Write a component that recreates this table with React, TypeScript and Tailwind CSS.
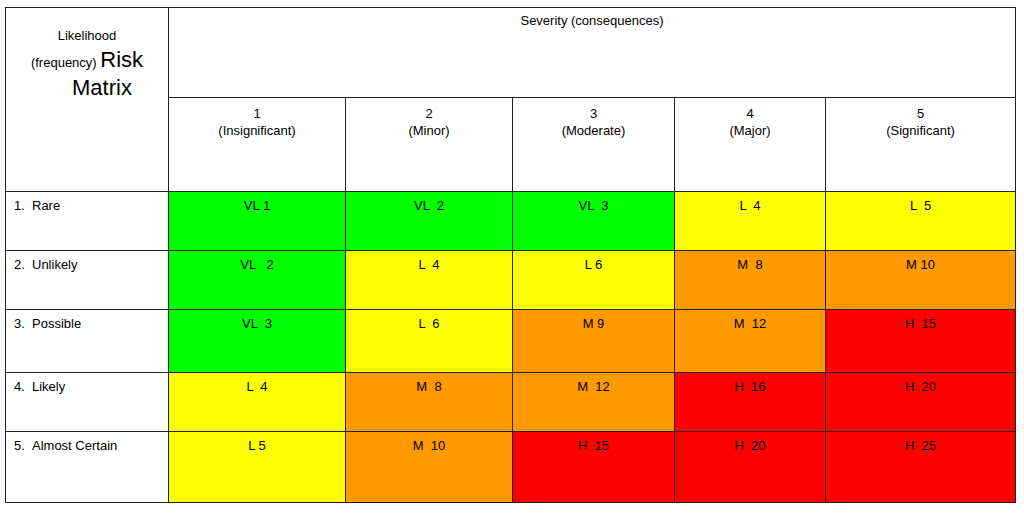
import React from "react";

type Level = "VL" | "L" | "M" | "H";

const fill: Record<Level, string> = {
  VL: "bg-[#00ff00]",
  L: "bg-[#ffff00]",
  M: "bg-[#ff9900]",
  H: "bg-[#ff0000]",
};

const severities = [
  ["1", "(Insignificant)"],
  ["2", "(Minor)"],
  ["3", "(Moderate)"],
  ["4", "(Major)"],
  ["5", "(Significant)"],
];

const rows: { no: string; label: string; h: string; cells: [Level, string][] }[] = [
  {
    no: "1.",
    label: "Rare",
    h: "h-[59px]",
    cells: [
      ["VL", "VL 1"],
      ["VL", "VL  2"],
      ["VL", "VL  3"],
      ["L", "L  4"],
      ["L", "L  5"],
    ],
  },
  {
    no: "2.",
    label: "Unlikely",
    h: "h-[59px]",
    cells: [
      ["VL", "VL   2"],
      ["L", "L  4"],
      ["L", "L 6"],
      ["M", "M  8"],
      ["M", "M 10"],
    ],
  },
  {
    no: "3.",
    label: "Possible",
    h: "h-[63px]",
    cells: [
      ["VL", "VL  3"],
      ["L", "L  6"],
      ["M", "M 9"],
      ["M", "M  12"],
      ["H", "H  15"],
    ],
  },
  {
    no: "4.",
    label: "Likely",
    h: "h-[59px]",
    cells: [
      ["L", "L  4"],
      ["M", "M  8"],
      ["M", "M  12"],
      ["H", "H  16"],
      ["H", "H  20"],
    ],
  },
  {
    no: "5.",
    label: "Almost Certain",
    h: "h-[71px]",
    cells: [
      ["L", "L 5"],
      ["M", "M  10"],
      ["H", "H  15"],
      ["H", "H  20"],
      ["H", "H  25"],
    ],
  },
];

const cellBorder = "border border-[#222]";

export default function App() {
  return (
    <div className="h-[513px] w-[1024px] bg-white pl-[5px] pt-[7px] font-['Liberation_Sans',Arial,sans-serif] text-[13px] leading-[16px] text-black">
      <table className="w-[1010px] table-fixed border-collapse border border-[#666]">
        <colgroup>
          <col className="w-[163px]" />
          <col className="w-[177px]" />
          <col className="w-[167px]" />
          <col className="w-[162px]" />
          <col className="w-[151px]" />
          <col className="w-[190px]" />
        </colgroup>
        <tbody>
          <tr className="h-[90px]">
            <td rowSpan={2} className={`${cellBorder} p-0 pt-[16px] align-top text-center`}>
              <div className="leading-[24px]">Likelihood</div>
              <div className="leading-[24px]">
                (frequency) <span className="text-[22px]">Risk</span>
              </div>
              <div className="pl-[30px] text-[22px] leading-[25px]">Matrix</div>
            </td>
            <td colSpan={5} className={`${cellBorder} pt-[5px] align-top text-center`}>
              Severity (consequences)
            </td>
          </tr>
          <tr className="h-[94px]">
            {severities.map(([n, name]) => (
              <td key={n} className={`${cellBorder} pt-[7px] align-top text-center leading-[17px]`}>
                <div>{n}</div>
                <div>{name}</div>
              </td>
            ))}
          </tr>
          {rows.map((r) => (
            <tr key={r.no} className={r.h}>
              <td className={`${cellBorder} pl-[8px] pt-[6px] align-top`}>
                <div className="flex">
                  <span className="w-[18px]">{r.no}</span>
                  <span>{r.label}</span>
                </div>
              </td>
              {r.cells.map(([lvl, txt], i) => (
                <td
                  key={i}
                  className={`${cellBorder} ${fill[lvl]} pt-[6px] align-top text-center whitespace-pre`}
                >
                  {txt}
                </td>
              ))}
            </tr>
          ))}
        </tbody>
      </table>
    </div>
  );
}
